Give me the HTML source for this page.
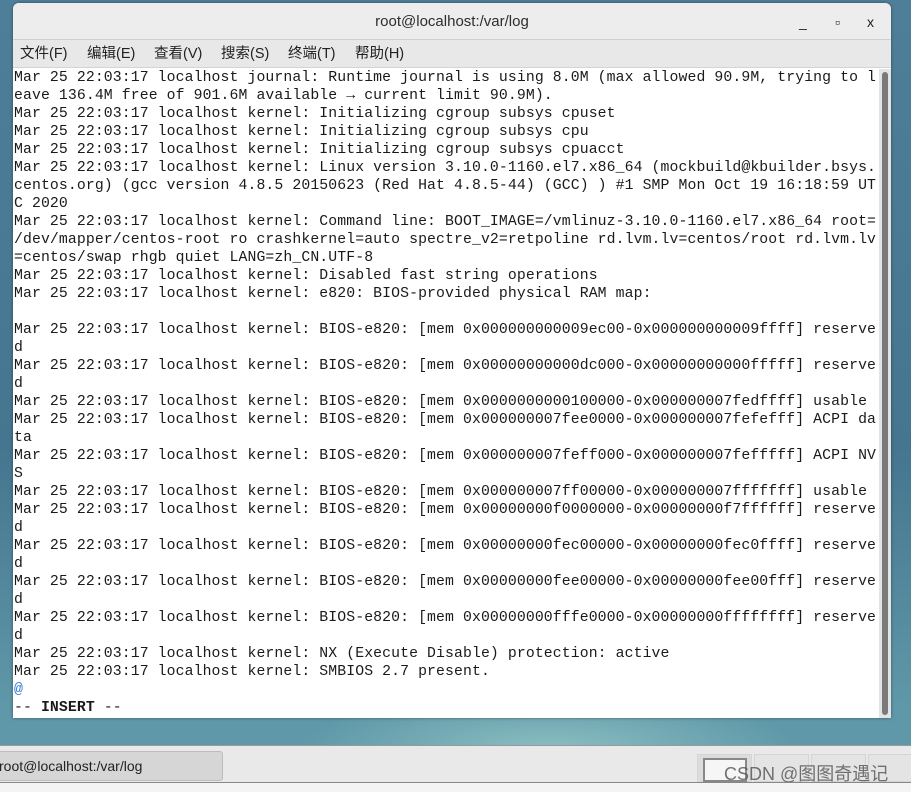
<!DOCTYPE html>
<html><head><meta charset="utf-8"><style>
*{margin:0;padding:0;box-sizing:border-box}
html,body{width:911px;height:792px;overflow:hidden}
body{position:relative;font-family:"Liberation Sans","Noto Sans CJK SC",sans-serif;background:#3f6f88;}
.bgl{position:absolute;left:0;top:0;width:911px;height:745px;background:linear-gradient(180deg,#4f7f98 0%,#45758f 60%,#5f98a8 95%);}
.glow{position:absolute;left:300px;top:690px;width:500px;height:120px;border-radius:50%;background:radial-gradient(ellipse at center,rgba(150,200,200,.8),rgba(150,200,200,0) 70%);}
.win{position:absolute;left:13px;top:3px;width:878px;height:715px;background:#fff;border-radius:6px 6px 0 0;overflow:hidden;box-shadow:0 0 3px rgba(0,0,0,.4)}
.title{height:36px;background:#ededed;text-align:center;font-size:15px;line-height:38px;color:#2e2e2e;position:relative}
.ctl{position:absolute;top:0;font-size:14px;color:#222}
.menu{height:29px;background:#e8e8e8;border-top:1px solid #d0d0d0;border-bottom:1px solid #d4d4d4;font-size:14.5px;line-height:28px;color:#222;padding-left:7px;white-space:nowrap}
.menu span{display:inline-block;width:67px}
pre{position:absolute;left:1px;top:66px;font-family:"Liberation Mono","DejaVu Sans Mono",monospace;font-size:14.8px;line-height:18px;color:#1a1a1a;letter-spacing:0.1px}
.sb{position:absolute;right:0;top:66px;width:12px;bottom:0;background:#e4e4e4}
.th{position:absolute;left:3px;top:3px;width:6px;bottom:3px;background:#7a7a7a;border-radius:3px}
.task{position:absolute;left:0;top:745px;width:911px;height:37px;background:#e9e9e9;border-top:1px solid #999}
.tb{position:absolute;left:-2px;top:5px;width:225px;height:30px;background:#d6d6d6;border:1px solid #bdbdbd;border-radius:3px;font-size:14px;line-height:28px;color:#222}
.ws{position:absolute;top:8px;width:55px;height:28px;border:1px solid #d5d5d5;background:#e4e4e4}
.bot{position:absolute;left:0;top:782px;width:911px;height:10px;background:#f4f4f4;border-top:1px solid #888}
.wm{position:absolute;left:724px;top:760px;font-size:18px;color:rgba(90,90,90,.85)}
</style></head><body>
<div class="bgl"></div><div class="glow"></div>
<div class="win">
<div class="title">root@localhost:/var/log
<span class="ctl" style="left:786px">_</span><span class="ctl" style="left:822px;font-weight:bold">▫</span><span class="ctl" style="left:854px">x</span></div>
<div class="menu"><span>文件(F)</span><span>编辑(E)</span><span>查看(V)</span><span>搜索(S)</span><span>终端(T)</span><span>帮助(H)</span></div>
<pre>Mar 25 22:03:17 localhost journal: Runtime journal is using 8.0M (max allowed 90.9M, trying to l
eave 136.4M free of 901.6M available → current limit 90.9M).
Mar 25 22:03:17 localhost kernel: Initializing cgroup subsys cpuset
Mar 25 22:03:17 localhost kernel: Initializing cgroup subsys cpu
Mar 25 22:03:17 localhost kernel: Initializing cgroup subsys cpuacct
Mar 25 22:03:17 localhost kernel: Linux version 3.10.0-1160.el7.x86_64 (mockbuild@kbuilder.bsys.
centos.org) (gcc version 4.8.5 20150623 (Red Hat 4.8.5-44) (GCC) ) #1 SMP Mon Oct 19 16:18:59 UT
C 2020
Mar 25 22:03:17 localhost kernel: Command line: BOOT_IMAGE=/vmlinuz-3.10.0-1160.el7.x86_64 root=
/dev/mapper/centos-root ro crashkernel=auto spectre_v2=retpoline rd.lvm.lv=centos/root rd.lvm.lv
=centos/swap rhgb quiet LANG=zh_CN.UTF-8
Mar 25 22:03:17 localhost kernel: Disabled fast string operations
Mar 25 22:03:17 localhost kernel: e820: BIOS-provided physical RAM map:

Mar 25 22:03:17 localhost kernel: BIOS-e820: [mem 0x000000000009ec00-0x000000000009ffff] reserve
d
Mar 25 22:03:17 localhost kernel: BIOS-e820: [mem 0x00000000000dc000-0x00000000000fffff] reserve
d
Mar 25 22:03:17 localhost kernel: BIOS-e820: [mem 0x0000000000100000-0x000000007fedffff] usable
Mar 25 22:03:17 localhost kernel: BIOS-e820: [mem 0x000000007fee0000-0x000000007fefefff] ACPI da
ta
Mar 25 22:03:17 localhost kernel: BIOS-e820: [mem 0x000000007feff000-0x000000007fefffff] ACPI NV
S
Mar 25 22:03:17 localhost kernel: BIOS-e820: [mem 0x000000007ff00000-0x000000007fffffff] usable
Mar 25 22:03:17 localhost kernel: BIOS-e820: [mem 0x00000000f0000000-0x00000000f7ffffff] reserve
d
Mar 25 22:03:17 localhost kernel: BIOS-e820: [mem 0x00000000fec00000-0x00000000fec0ffff] reserve
d
Mar 25 22:03:17 localhost kernel: BIOS-e820: [mem 0x00000000fee00000-0x00000000fee00fff] reserve
d
Mar 25 22:03:17 localhost kernel: BIOS-e820: [mem 0x00000000fffe0000-0x00000000ffffffff] reserve
d
Mar 25 22:03:17 localhost kernel: NX (Execute Disable) protection: active
Mar 25 22:03:17 localhost kernel: SMBIOS 2.7 present.
<span style="color:#3a7bd5">@</span>
-- <b>INSERT</b> --</pre>
<div class="sb"><div class="th"></div></div>
</div>
<div class="task">
<div class="tb">root@localhost:/var/log</div>
<div class="ws" style="left:697px;background:#dcdcdc"><div style="margin:3px 0 0 5px;width:44px;height:24px;border:2px solid #888;background:#f6f6f6"></div></div>
<div class="ws" style="left:754px"></div>
<div class="ws" style="left:811px"></div>
<div class="ws" style="left:868px"></div>
</div>
<div class="wm">CSDN @图图奇遇记</div>
<div class="bot"></div>
</body></html>
